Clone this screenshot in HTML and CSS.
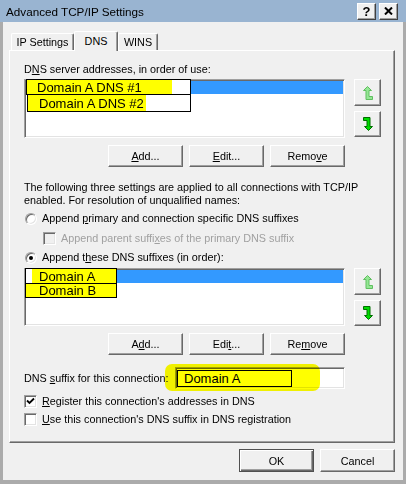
FILE: index.html
```html
<!DOCTYPE html>
<html>
  <head>
    <link rel="stylesheet" href="styles.css">
  </head>
  <body>
    <div class="window">
      <div class="titlebar">
        <span class="title">Advanced TCP/IP Settings</span>
        <div class="caption-btns">
          <span class="cap-btn">?</span>
          <span class="cap-btn">
            <svg width="9" height="8" viewBox="0 0 9 8">
              <path d="M1 0.5 L8 7.5 M8 0.5 L1 7.5" stroke="#000" stroke-width="2" />
            </svg>
          </span>
        </div>
      </div>

      <div class="frame">
        <div class="tabs">
          <div class="tab tab-ip">IP Settings</div>
          <div class="tab tab-dns active">DNS</div>
          <div class="tab tab-wins">WINS</div>
        </div>

        <div class="panel">
          <div class="label">D<u>N</u>S server addresses, in order of use:</div>
          <div class="list-row">
            <div class="listbox">
              <div class="sel-row"></div>
              <div class="note note-dns1"><span class="hl hl-dns1">Domain A DNS #1</span></div>
              <div class="note note-dns2"><span class="hl hl-dns2">Domain A DNS #2</span></div>
            </div>
            <div class="arrows">
              <div class="btn arrow-btn up">
                <svg width="10" height="14" viewBox="0 0 10 14">
                  <path d="M4.5 0.5 L8.5 4.5 L6 4.5 L6 10.5 L9.5 10.5 L9.5 13.5 L3 13.5 L3 4.5 L0.5 4.5 Z" fill="#94e694" stroke="#5fbf5f" />
                </svg>
              </div>
              <div class="btn arrow-btn down">
                <svg width="10" height="14" viewBox="0 0 10 14">
                  <path d="M0.5 0.5 L7 0.5 L7 9.5 L9.5 9.5 L5.5 13.5 L1.5 9.5 L4 9.5 L4 3.5 L0.5 3.5 Z" fill="#00dc00" stroke="#006e00" />
                </svg>
              </div>
            </div>
          </div>
          <div class="btn-row">
            <button class="btn"><u>A</u>dd...</button>
            <button class="btn"><u>E</u>dit...</button>
            <button class="btn">Remo<u>v</u>e</button>
          </div>

          <div class="para">
            The following three settings are applied to all connections with TCP/IP<br>
            enabled. For resolution of unqualified names:
          </div>

          <div class="opt opt-first">
            <span class="radio"></span>
            <span>Append <u>p</u>rimary and connection specific DNS suffixes</span>
          </div>
          <div class="opt opt-sub">
            <span class="check disabled"></span>
            <span class="muted">Append parent suffi<u>x</u>es of the primary DNS suffix</span>
          </div>
          <div class="opt opt-second">
            <span class="radio on"></span>
            <span>Append t<u>h</u>ese DNS suffixes (in order):</span>
          </div>

          <div class="list-row list-row-2">
            <div class="listbox">
              <div class="sel-row"></div>
              <div class="note note-sa"><span class="hl hl-sa">Domain A</span></div>
              <div class="note note-sb"><span class="hl hl-sb">Domain B</span></div>
            </div>
            <div class="arrows">
              <div class="btn arrow-btn up">
                <svg width="10" height="14" viewBox="0 0 10 14">
                  <path d="M4.5 0.5 L8.5 4.5 L6 4.5 L6 10.5 L9.5 10.5 L9.5 13.5 L3 13.5 L3 4.5 L0.5 4.5 Z" fill="#94e694" stroke="#5fbf5f" />
                </svg>
              </div>
              <div class="btn arrow-btn down">
                <svg width="10" height="14" viewBox="0 0 10 14">
                  <path d="M0.5 0.5 L7 0.5 L7 9.5 L9.5 9.5 L5.5 13.5 L1.5 9.5 L4 9.5 L4 3.5 L0.5 3.5 Z" fill="#00dc00" stroke="#006e00" />
                </svg>
              </div>
            </div>
          </div>
          <div class="btn-row">
            <button class="btn">A<u>d</u>d...</button>
            <button class="btn">Edi<u>t</u>...</button>
            <button class="btn">Re<u>m</u>ove</button>
          </div>

          <div class="suffix-row">
            <span>DNS <u>s</u>uffix for this connection:</span>
            <div class="textbox">
              <div class="blob"></div>
              <div class="note note-suffix">Domain A</div>
            </div>
          </div>

          <div class="opt opt-reg">
            <span class="check">
              <svg width="11" height="11" viewBox="0 0 11 11">
                <path d="M2 4.5 L4.5 7 L9 2.5" fill="none" stroke="#000" stroke-width="1.8" />
              </svg>
            </span>
            <span><u>R</u>egister this connection's addresses in DNS</span>
          </div>
          <div class="opt opt-use">
            <span class="check"></span>
            <span><u>U</u>se this connection's DNS suffix in DNS registration</span>
          </div>
        </div>

        <div class="footer">
          <button class="btn default">OK</button>
          <button class="btn">Cancel</button>
        </div>
      </div>
    </div>
  </body>
</html>
```

FILE: styles.css
```css
body {
  margin: 0;
  background: #fff;
  font-family: "Liberation Sans", Arial, sans-serif;
  font-size: 10.8px;
  color: #000;
}

u {
  text-underline-offset: 1px;
}

.window {
  width: 406px;
  height: 484px;
  display: flex;
  flex-direction: column;
}

.titlebar {
  height: 22px;
  flex: none;
  box-sizing: border-box;
  background: #99b4d1;
  display: flex;
  align-items: center;
  justify-content: space-between;
  padding: 0 8px 0 6px;
}

.title {
  font-size: 11.7px;
}

.caption-btns {
  display: flex;
  gap: 3px;
}

.cap-btn {
  width: 19px;
  height: 17px;
  box-sizing: border-box;
  background: #f0f0f0;
  border: 1px solid;
  border-color: #fff #404040 #404040 #fff;
  box-shadow: inset -1px -1px #a0a0a0;
  display: flex;
  align-items: center;
  justify-content: center;
  font-weight: bold;
  font-size: 13px;
}

.frame {
  flex: 1;
  background: #f0f0f0;
  border: 3px solid #ababab;
  border-top: 0;
  border-bottom-width: 4px;
  display: flex;
  flex-direction: column;
  padding: 9px 8px 8px 6px;
}

/* tabs */

.tabs {
  display: flex;
  align-items: flex-end;
  height: 19px;
  padding-left: 2px;
  flex: none;
}

.tab {
  height: 17px;
  box-sizing: border-box;
  border: 1px solid;
  border-color: #fff #696969 transparent #fff;
  border-bottom: 0;
  border-radius: 2px 2px 0 0;
  box-shadow: inset -1px 0 #a0a0a0;
  background: #f0f0f0;
  display: flex;
  align-items: center;
  justify-content: center;
}

.tab-ip {
  width: 63px;
}

.tab-dns {
  width: 44px;
}

.tab-wins {
  width: 40px;
}

.tab.active {
  height: 20px;
  margin-bottom: -1px;
  position: relative;
  z-index: 1;
  padding-bottom: 2px;
}

.panel {
  height: 393px;
  flex: none;
  box-sizing: border-box;
  border: 1px solid;
  border-color: #fff #696969 #696969 #fff;
  box-shadow: inset -1px -1px #a0a0a0;
  padding: 12px 13px 0 14px;
}

.label {
  height: 13px;
  line-height: 13px;
}

/* list boxes */

.list-row {
  display: flex;
  margin-top: 3px;
}

.list-row-2 {
  margin-top: 4px;
}

.listbox {
  width: 321px;
  height: 59px;
  box-sizing: border-box;
  background: #fff;
  border: 1px solid;
  border-color: #a0a0a0 #fff #fff #a0a0a0;
  box-shadow: inset 1px 1px #696969, inset -1px -1px #e3e3e3;
  padding: 1px;
  position: relative;
}

.list-row-2 .listbox {
  height: 58px;
}

.sel-row {
  height: 13px;
  background: #3399ff;
}

.note {
  position: absolute;
  box-sizing: border-box;
  border: 1px solid #000;
  background: #fff;
  font-size: 13px;
  display: flex;
  align-items: stretch;
}

.hl {
  background: #ffff00;
  display: flex;
  align-items: center;
  box-sizing: border-box;
}

.note-dns1 {
  left: 1px;
  top: -1px;
  width: 165px;
  height: 16px;
}

.hl-dns1 {
  width: 145px;
  padding-left: 10px;
}

.note-dns2 {
  left: 2px;
  top: 14px;
  width: 164px;
  height: 18px;
}

.hl-dns2 {
  width: 118px;
  padding-left: 11px;
}

.note-sa {
  left: 0;
  top: -1px;
  width: 92px;
  height: 16px;
}

.hl-sa {
  width: 100%;
  margin-left: 6px;
  padding-left: 7px;
}

.note-sb {
  left: 0;
  top: 14px;
  width: 92px;
  height: 15px;
}

.hl-sb {
  width: 100%;
  padding-left: 13px;
}

.arrows {
  display: flex;
  flex-direction: column;
  gap: 5px;
  margin-left: 9px;
}

.arrow-btn {
  width: 27px;
  height: 27px;
  display: flex;
  align-items: center;
  justify-content: center;
}

.arrow-btn.down {
  height: 26px;
}

/* buttons */

.btn {
  box-sizing: border-box;
  background: #f0f0f0;
  border: 1px solid;
  border-color: #fff #696969 #696969 #fff;
  box-shadow: inset -1px -1px #a0a0a0;
  font-family: inherit;
  font-size: 10.8px;
  color: #000;
  padding: 0;
  margin: 0;
}

button.btn {
  width: 75px;
  height: 22px;
}

.btn-row {
  display: flex;
  justify-content: flex-end;
  gap: 6px;
  width: 321px;
  margin-top: 7px;
}

.para {
  margin-top: 14px;
  line-height: 13px;
}

/* radios and checkboxes */

.opt {
  display: flex;
  align-items: center;
  gap: 5px;
  height: 13px;
  line-height: 13px;
}

.opt-first {
  margin-top: 5px;
}

.opt-sub {
  margin-top: 7px;
}

.opt-second {
  margin-top: 6px;
}

.opt-reg {
  margin-top: 6px;
}

.opt-use {
  margin-top: 5px;
}

.radio {
  width: 12px;
  height: 12px;
  margin-left: 1px;
  box-sizing: border-box;
  border-radius: 50%;
  background: #fff;
  border: 1px solid;
  border-color: #a0a0a0 #fff #fff #a0a0a0;
  box-shadow: inset 1px 1px #696969, inset -1px -1px #e3e3e3;
  position: relative;
}

.radio.on::after {
  content: "";
  position: absolute;
  left: 3px;
  top: 3px;
  width: 4px;
  height: 4px;
  border-radius: 50%;
  background: #000;
}

.check {
  width: 13px;
  height: 13px;
  flex: none;
  box-sizing: border-box;
  background: #fff;
  border: 1px solid;
  border-color: #a0a0a0 #fff #fff #a0a0a0;
  box-shadow: inset 1px 1px #696969, inset -1px -1px #e3e3e3;
  display: flex;
}

.check.disabled {
  background: #f0f0f0;
  margin-left: 19px;
}

.muted {
  color: #a0a0a0;
}

/* suffix text box */

.suffix-row {
  display: flex;
  align-items: center;
  width: 321px;
  height: 22px;
  margin-top: 12px;
}

.textbox {
  width: 170px;
  height: 22px;
  margin-left: auto;
  box-sizing: border-box;
  background: #fff;
  border: 1px solid;
  border-color: #a0a0a0 #fff #fff #a0a0a0;
  box-shadow: inset 1px 1px #696969, inset -1px -1px #e3e3e3;
  position: relative;
}

.blob {
  position: absolute;
  left: -11px;
  top: -4px;
  width: 155px;
  height: 27px;
  border-radius: 7px;
  background: #ffff00;
  mix-blend-mode: multiply;
}

.note-suffix {
  left: 1px;
  top: 2px;
  width: 115px;
  height: 17px;
  background: #ffff00;
  align-items: center;
  padding-left: 6px;
}

/* dialog footer */

.footer {
  display: flex;
  justify-content: flex-end;
  gap: 6px;
  margin-top: 6px;
}

.footer button.btn {
  height: 23px;
}

.btn.default {
  border-color: #505050;
  box-shadow: inset 1px 1px #fff, inset -1px -1px #696969, inset -2px -2px #a0a0a0;
}
```
